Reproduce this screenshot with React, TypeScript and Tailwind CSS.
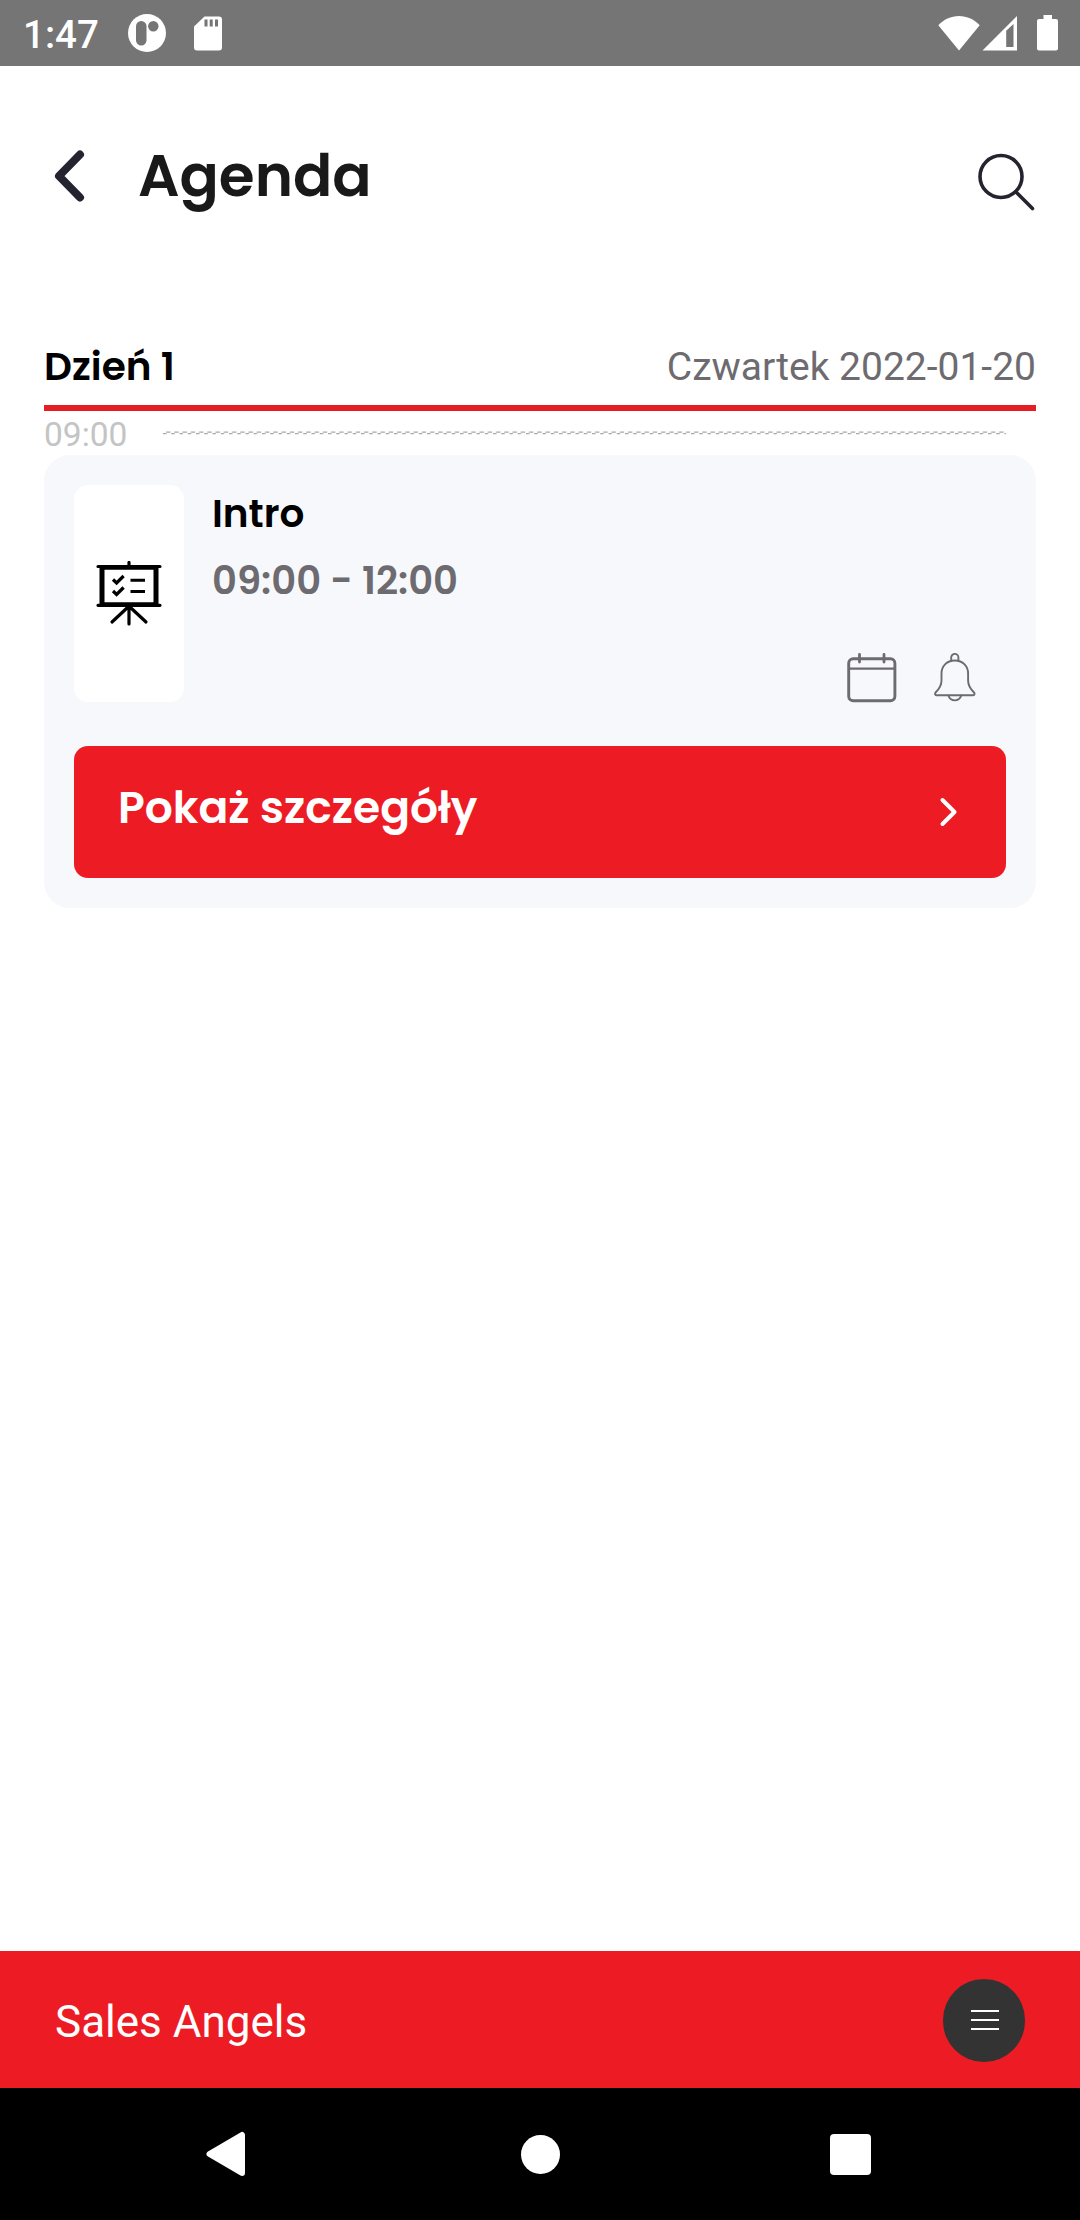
import type { ReactNode } from "react";

const heading = "font-['Poppins','Inter',sans-serif] font-semibold whitespace-nowrap";
const body = "font-['Roboto',sans-serif] whitespace-nowrap";

function StatusBar() {
  return (
    <div className="h-[66px] shrink-0 bg-[#757575] flex items-center text-white">
      <span className="font-['Roboto',sans-serif] font-medium text-[38.5px] leading-[48px] ml-[23px] w-[105px] mt-[3px]">
        1:47
      </span>
      <svg width="38" height="38" viewBox="0 0 38 38" className="fill-white">
        <circle cx="19" cy="19" r="19" />
        <rect x="8" y="7" width="10.5" height="24.5" rx="5.2" className="fill-[#757575]" />
        <circle cx="25.3" cy="12.3" r="5.2" className="fill-[#757575]" />
      </svg>
      <svg width="28" height="35" viewBox="0 0 28 35" className="fill-white ml-7">
        <path d="M10.5 0.5H25a3 3 0 0 1 3 3V31.5a3 3 0 0 1-3 3H3a3 3 0 0 1-3-3V10.5Z" />
        <path d="M10.5 3.5h3v7h-3zM15.7 3.5h3v7h-3zM21 3.5h3v7h-3z" className="fill-[#757575]" />
      </svg>
      <svg width="42" height="35" viewBox="0 0 42 35" className="fill-white ml-auto">
        <path d="M21 34.5 0.3 9.2C5.5 3.6 13 0 21 0s15.500 3.600 20.700 9.200Z" />
      </svg>
      <svg width="36" height="35" viewBox="0 0 36 35" className="fill-white ml-[2px]">
        <path fillRule="evenodd" d="M35 0V34.5H0.5ZM24.2 14.8V31H31.5V8Z" />
      </svg>
      <svg width="21" height="36" viewBox="0 0 21 36" className="fill-white ml-[19px] mr-[22px]">
        <path d="M6.5 0h8.5v4h4a2 2 0 0 1 2 2v27.5a2 2 0 0 1-2 2H2a2 2 0 0 1-2-2V6a2 2 0 0 1 2-2h4.500Z" />
      </svg>
    </div>
  );
}

function Header() {
  return (
    <header className="h-[218px] shrink-0 flex items-center pl-[54px] pr-[44px]">
      <svg width="32" height="52" viewBox="0 0 32 52" fill="none" className="mt-[2px]">
        <path d="M26 4.5 5 26l21 21.5" stroke="#242430" strokeWidth="8" strokeLinecap="round" strokeLinejoin="round" />
      </svg>
      <h1 className={`${heading} text-[58px] leading-[72px] text-[#191919] ml-[52px] mt-[2px]`}>
        Agenda
      </h1>
      <svg width="58" height="58" viewBox="0 0 58 58" fill="none" className="ml-auto mt-[13px]">
        <circle cx="23" cy="23.5" r="21" stroke="#242430" strokeWidth="3.6" />
        <path d="m38.5 39.5 16 16" stroke="#242430" strokeWidth="3.6" strokeLinecap="round" />
      </svg>
    </header>
  );
}

function BoardIcon() {
  return (
    <svg width="66" height="66" viewBox="0 0 66 66" fill="none" stroke="#000" strokeLinecap="round">
      <path d="M33 1.5V5M2 5.5H64M2 44.3H64" strokeWidth="3.2" />
      <path d="M6 5.5V44.3M60 5.5V44.3" strokeWidth="5" strokeLinecap="butt" />
      <path d="M4 7H62M4 43H62" strokeWidth="3.5" strokeLinecap="butt" />
      <path d="M33 45V63M31 47 16 61M35 47 50 61" strokeWidth="3.2" />
      <path d="m17 18.5 3.6 3.5 7-7M17 30l3.6 3.5 7-7" strokeWidth="3.2" strokeLinecap="butt" />
      <path d="M34.5 19.2H49M34.5 30.5H49" strokeWidth="3" strokeLinecap="butt" />
    </svg>
  );
}

function CalendarIcon() {
  return (
    <svg width="50" height="50" viewBox="0 0 50 50" fill="none" stroke="#6d6b70" strokeLinecap="round">
      <rect x="1.7" y="5.7" width="46.2" height="42" rx="4.5" strokeWidth="2.9" />
      <path d="M2 15.6H48" strokeWidth="2.2" />
      <path d="M12.5 1.5V9M37 1.5V9" strokeWidth="2.8" />
    </svg>
  );
}

function BellIcon() {
  return (
    <svg width="42" height="50" viewBox="0 0 42 50" fill="none" stroke="#6d6b70" strokeWidth="1.9" strokeLinecap="round" strokeLinejoin="round">
      <path d="M17.2 8V4.5a3.6 3.6 0 0 1 7.2 0V8" />
      <path d="M20.8 7.5C12.5 7.5 7.5 13.5 7.5 20.5v7c0 5.500-2.500 8.500-5.500 11.500-1.800 1.900-.8 3.300 1 3.300h35.600c1.800 0 2.800-1.400 1-3.300-3-3-5.500-6-5.500-11.500v-7c0-7-5-13-13.300-13Z" />
      <path d="M14.5 42.5a6.4 5.9 0 0 0 12.6 0" />
    </svg>
  );
}

function DayHeader({ day, date }: { day: string; date: string }) {
  return (
    <div className="h-[127px] border-b-[6px] border-[#e51e26] flex justify-between pt-[59px]">
      <h2 className={`${heading} text-[39px] leading-[48px] text-black`}>{day}</h2>
      <span className={`${body} text-[39px] leading-[48px] text-[#6d6b70]`}>{date}</span>
    </div>
  );
}

function TimeMark({ time }: { time: string }) {
  return (
    <div className="h-[44px] flex items-center">
      <span className={`${body} text-[33.5px] leading-[40px] text-[#c4c4c4] w-[119px] mt-[3px]`}>{time}</span>
      <svg width="843" height="4" className="-mt-px">
        <defs>
          <pattern id="dash" width="8.25" height="4" patternUnits="userSpaceOnUse">
            <path d="M0 2.6H3.4M3 1.2H7.5" fill="none" stroke="#a8a8a8" strokeWidth="1.2" />
          </pattern>
        </defs>
        <rect width="843" height="4" fill="url(#dash)" />
      </svg>
    </div>
  );
}

function AgendaCard({ title, hours, icon }: { title: string; hours: string; icon: ReactNode }) {
  return (
    <article className="h-[453px] rounded-[26px] bg-[#f7f8fc] p-[30px] flex flex-col justify-between">
      <div className="flex h-[217px]">
        <div className="w-[110px] rounded-[14px] bg-white flex items-center justify-center">{icon}</div>
        <div className="flex-1 pl-[28px] pr-[30px] flex flex-col">
          <h3 className={`${heading} text-[39px] leading-[48px] text-black mt-[5px]`}>{title}</h3>
          <p className={`${heading} text-[38.6px] leading-[48px] text-[#6d6b70] mt-[19px]`}>{hours}</p>
          <div className="mt-auto flex justify-end gap-[37px] relative top-px">
            <CalendarIcon />
            <BellIcon />
          </div>
        </div>
      </div>
      <button className="h-[132px] rounded-[14px] bg-[#ed1c24] flex items-center justify-between pl-[44px] pr-[47px] text-white">
        <span className={`${heading} text-[44px] leading-[52px] -mt-[9px]`}>Pokaż szczegóły</span>
        <svg width="20" height="30" viewBox="0 0 20 30" fill="none">
          <path d="M3.5 3 15.5 15 3.5 27" stroke="#fff" strokeWidth="4" strokeLinecap="round" strokeLinejoin="round" />
        </svg>
      </button>
    </article>
  );
}

function Footer() {
  return (
    <footer className="h-[137px] shrink-0 bg-[#ed1c24] flex items-center justify-between pl-[55px] pr-[55px]">
      <span className={`${body} text-[44px] leading-[52px] text-white mt-[4px]`}>Sales Angels</span>
      <button className="w-[82px] h-[83px] rounded-full bg-[#333] flex flex-col items-center justify-center gap-[7px] pl-[2px] mt-px">
        <span className="w-[28px] h-[2px] bg-white" />
        <span className="w-[28px] h-[2px] bg-white" />
        <span className="w-[28px] h-[2px] bg-white" />
      </button>
    </footer>
  );
}

function NavBar() {
  return (
    <nav className="h-[132px] shrink-0 bg-black flex items-center pl-[206px]">
      <svg width="40" height="46" viewBox="0 0 40 46">
        <path d="M3.5 23 36 4V42Z" fill="#fff" stroke="#fff" strokeWidth="6" strokeLinejoin="round" />
      </svg>
      <span className="w-[39px] h-[39px] rounded-full bg-white ml-[275px]" />
      <span className="w-[41px] h-[41px] rounded-[4px] bg-white ml-[270px]" />
    </nav>
  );
}

export default function App() {
  return (
    <div className="w-[1080px] h-[2220px] bg-white flex flex-col overflow-hidden">
      <StatusBar />
      <Header />
      <main className="flex-1 px-[44px]">
        <DayHeader day="Dzień 1" date="Czwartek 2022-01-20" />
        <TimeMark time="09:00" />
        <AgendaCard title="Intro" hours="09:00 - 12:00" icon={<BoardIcon />} />
      </main>
      <Footer />
      <NavBar />
    </div>
  );
}
